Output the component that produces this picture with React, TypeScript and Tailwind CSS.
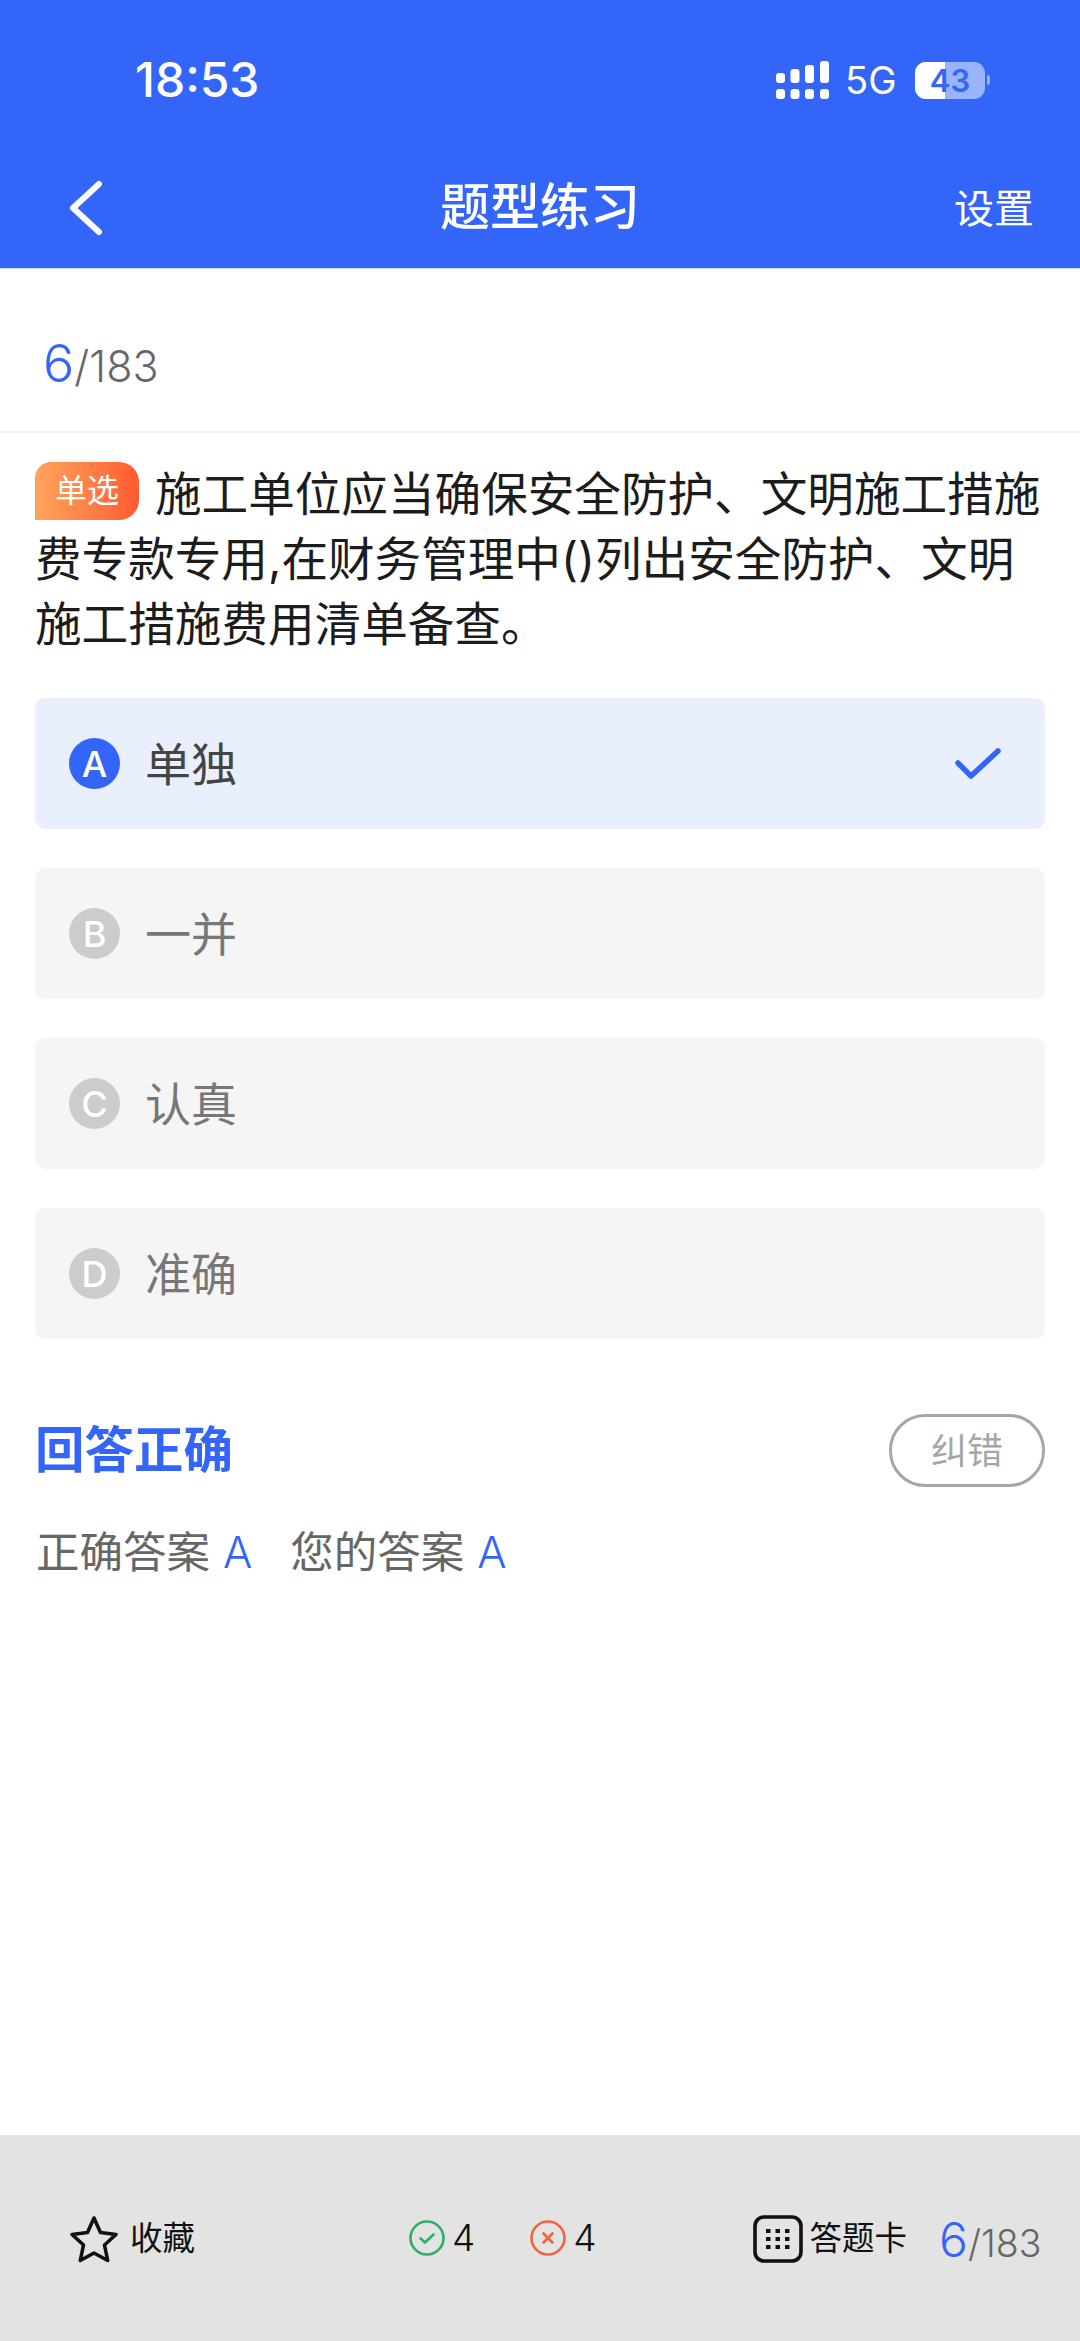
import React from 'react';

const CJK = "font-['Inter','Noto_Sans_CJK_SC',sans-serif]";

const options = [
  { key: 'A', label: '单独', active: true },
  { key: 'B', label: '一并', active: false },
  { key: 'C', label: '认真', active: false },
  { key: 'D', label: '准确', active: false },
];

const SignalIcon = () => (
  <svg width="53" height="38" viewBox="0 0 53 38" fill="white">
    <rect x="0" y="12" width="9" height="10" rx="3" />
    <rect x="14.5" y="8" width="9" height="14" rx="3" />
    <rect x="29" y="4" width="9" height="18" rx="3" />
    <rect x="44" y="0" width="9" height="22" rx="3" />
    <rect x="0" y="28" width="9" height="10" rx="3" />
    <rect x="14.5" y="28" width="9" height="10" rx="3" />
    <rect x="29" y="28" width="9" height="10" rx="3" />
    <rect x="44" y="28" width="9" height="10" rx="3" />
  </svg>
);

const Battery = () => (
  <div className="flex items-center">
    <div className="relative w-[70px] h-[37px] rounded-[11px] overflow-hidden bg-white/50 flex items-center justify-center">
      <div className="absolute left-0 top-0 bottom-0 w-[30px] bg-white" />
      <span className="relative text-[31px] font-semibold leading-none text-[#3366f8]">43</span>
    </div>
    <div className="ml-[2px] w-[3px] h-[10px] rounded-r-full bg-white/50" />
  </div>
);

const Progress = ({ big, small }: { big: string; small: string }) => (
  <div className="flex items-baseline font-light">
    <span className={`${big} leading-none text-[#3366f8]`}>6</span>
    <span className={`${small} leading-none text-[#666666]`}>/183</span>
  </div>
);

export default function App() {
  return (
    <div className={`${CJK} w-[1080px] h-[2341px] bg-white flex flex-col overflow-hidden`}>
      {/* Header */}
      <div className="h-[269px] bg-[#3366f8] text-white flex flex-col border-b border-[#c9d7fd]">
        <div className="h-[150px] pl-[135px] pr-[90px] pt-[54px] flex items-start justify-between">
          <span className="text-[48px] leading-[52px] font-medium">18:53</span>
          <div className="flex items-center mt-[7px]">
            <SignalIcon />
            <span className="ml-[16.5px] text-[38px] leading-none">5G</span>
            <div className="ml-[18.5px]">
              <Battery />
            </div>
          </div>
        </div>
        <div className="relative flex-1 flex items-start justify-center">
          <svg className="absolute left-[67px] top-[30px]" width="38" height="56" viewBox="0 0 38 56" fill="none" stroke="white" strokeWidth="6" strokeLinecap="round" strokeLinejoin="round">
            <path d="M32 4 6 28l26 24" />
          </svg>
          <span className="mt-[27px] text-[50px] leading-[60px] font-medium">题型练习</span>
          <span className="absolute right-[46px] top-[36px] text-[40px] leading-[46px]">设置</span>
        </div>
      </div>

      {/* Progress */}
      <div className="h-[164px] border-b-2 border-[#f2f2f2] pl-[43px] flex items-center pt-[27px]">
        <Progress big="text-[52px]" small="text-[43px]" />
      </div>

      {/* Question */}
      <div className="pl-[35px] pr-[35px] pt-[29px] text-[46.6px] leading-[65px] text-[#1c1c1c]">
        <span className="inline-flex align-top items-center justify-center w-[104px] h-[58px] mr-[16px] rounded-tl-[16px] rounded-r-[20px] bg-gradient-to-r from-[#ffa35c] to-[#ff5a30] text-white text-[32px] leading-none">
          单选
        </span>
        施工单位应当确保安全防护、文明施工措施费专款专用,在财务管理中()列出安全防护、文明施工措施费用清单备查。
      </div>

      {/* Options */}
      <div className="mt-[41px] px-[35px] flex flex-col gap-[39px]">
        {options.map((o) => (
          <div
            key={o.key}
            className={`h-[131px] rounded-[10px] pl-[34px] pr-[44px] flex items-center ${o.active ? 'bg-[#e9effd]' : 'bg-[#f5f5f5]'}`}
          >
            <div
              className={`w-[51px] h-[51px] rounded-full flex items-center justify-center text-white text-[36px] font-medium leading-none ${o.active ? 'bg-[#3366f8]' : 'bg-[#cccccc]'}`}
            >
              {o.key}
            </div>
            <span className={`ml-[25px] text-[46px] leading-none ${o.active ? 'text-[#444444]' : 'text-[#777777]'}`}>
              {o.label}
            </span>
            {o.active && (
              <svg className="ml-auto" width="46" height="32" viewBox="0 0 46 32" fill="none" stroke="#3366f8" strokeWidth="5.5" strokeLinecap="round" strokeLinejoin="round">
                <path d="M3 15 16 28 43 3" />
              </svg>
            )}
          </div>
        ))}
      </div>

      {/* Result */}
      <div className="mt-[75px] px-[35px] flex items-center justify-between">
        <span className="text-[49.5px] leading-none font-bold text-[#3366f8]">回答正确</span>
        <div className="w-[156px] h-[73px] rounded-[36px] border-[3px] border-[#a6a6a6] flex items-center justify-center text-[36px] leading-none text-[#a6a6a6]">
          纠错
        </div>
      </div>
      <div className="mt-[41px] pl-[36px] flex items-center text-[43.5px] leading-[48px] text-[#666666]">
        <span>正确答案</span>
        <span className="ml-[13px] text-[#3366f8] font-light">A</span>
        <span className="ml-[38px]">您的答案</span>
        <span className="ml-[13px] text-[#3366f8] font-light">A</span>
      </div>

      {/* Bottom bar */}
      <div className="mt-auto h-[206px] bg-[#e3e3e3] pl-[70px] pb-[3px] flex items-start pt-[80px]">
        <svg width="48" height="48" viewBox="0 0 48 48" fill="none" stroke="#111111" strokeWidth="3.6" strokeLinejoin="round">
          <path d="M24 3l6.5 14.5 15.5 2-11.500 10.500 3.200 15.500L24 38l-13.700 7.500 3.200-15.500L2 19.500l15.500-2z" />
        </svg>
        <span className="ml-[12px] mt-[5px] text-[32.500px] leading-[38px] text-[#111111]">收藏</span>

        <svg className="ml-[214px] mt-[5px]" width="36" height="36" viewBox="0 0 36 36" fill="none" stroke="#2fae66" strokeWidth="2.600" strokeLinecap="round" strokeLinejoin="round">
          <circle cx="18" cy="18" r="16.500" />
          <path d="M11.500 18.500 16 22.500 24.500 14.500" />
        </svg>
        <span className="ml-[7px] mt-[3px] text-[37px] leading-[40px] font-light text-[#111111]">4</span>

        <svg className="ml-[55px] mt-[5px]" width="36" height="36" viewBox="0 0 36 36" fill="none" stroke="#f2643f" strokeWidth="2.600" strokeLinecap="round">
          <circle cx="18" cy="18" r="16.500" />
          <path d="M13.500 13.500l9 9M22.500 13.500l-9 9" />
        </svg>
        <span className="ml-[7px] mt-[3px] text-[37px] leading-[40px] font-light text-[#111111]">4</span>

        <svg className="ml-[156px]" width="50" height="48" viewBox="0 0 50 48" fill="none">
          <rect x="2" y="2" width="46" height="44" rx="9" stroke="#111111" strokeWidth="3.600" />
          <g fill="#111111">
            <rect x="13" y="14" width="4.500" height="4" />
            <rect x="22.500" y="14" width="4.500" height="4" />
            <rect x="32" y="14" width="4.500" height="4" />
            <rect x="13" y="22" width="4.500" height="4" />
            <rect x="22.500" y="22" width="4.500" height="4" />
            <rect x="32" y="22" width="4.500" height="4" />
            <rect x="13" y="30" width="4.500" height="4" />
            <rect x="22.500" y="30" width="4.500" height="4" />
            <rect x="32" y="30" width="4.500" height="4" />
          </g>
        </svg>
        <span className="ml-[7px] mt-[5px] text-[32.500px] leading-[38px] text-[#111111]">答题卡</span>
        <div className="ml-[32px] mt-[1px]">
          <Progress big="text-[48px]" small="text-[37.500px]" />
        </div>
      </div>
    </div>
  );
}
